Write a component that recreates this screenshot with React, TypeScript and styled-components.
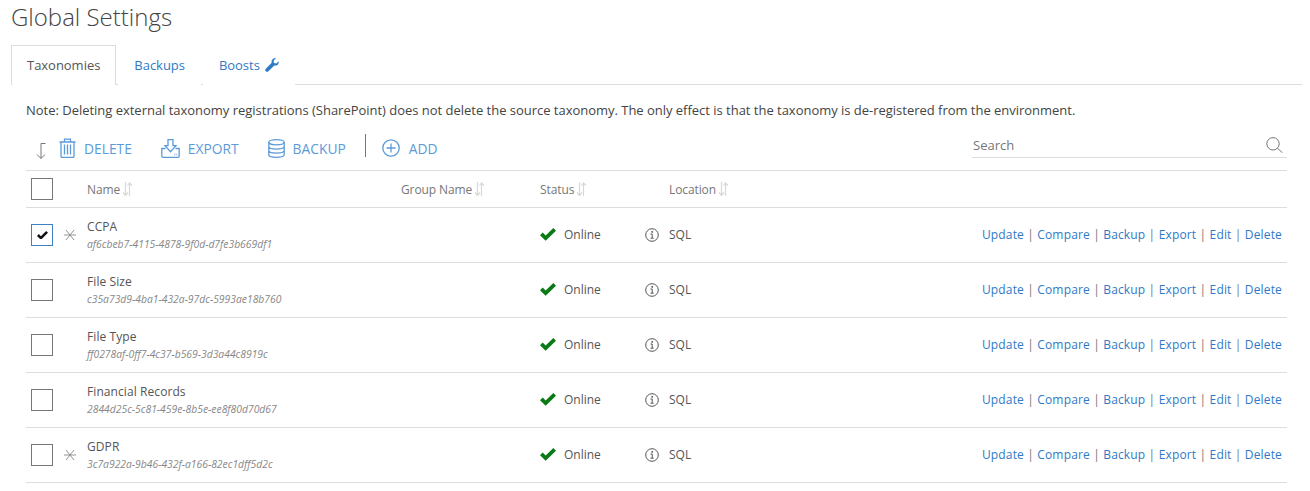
import styled, { createGlobalStyle } from "styled-components";

const rows = [
  { name: "CCPA", id: "af6cbeb7-4115-4878-9f0d-d7fe3b669df1", star: true, checked: true },
  { name: "File Size", id: "c35a73d9-4ba1-432a-97dc-5993ae18b760", star: false, checked: false },
  { name: "File Type", id: "ff0278af-0ff7-4c37-b569-3d3a44c8919c", star: false, checked: false },
  { name: "Financial Records", id: "2844d25c-5c81-459e-8b5e-ee8f80d70d67", star: false, checked: false },
  { name: "GDPR", id: "3c7a922a-9b46-432f-a166-82ec1dff5d2c", star: true, checked: false },
];

const actions = ["Update", "Compare", "Backup", "Export", "Edit", "Delete"];

const GlobalStyle = createGlobalStyle`
  html, body {
    margin: 0;
    background: #fff;
    font-family: "Open Sans", "Liberation Sans", sans-serif;
    color: #444;
  }
`;

const Page = styled.div`
  width: 1310px;
  height: 491px;
  overflow: hidden;
  box-sizing: border-box;
  padding-left: 11px;
`;

const Title = styled.h1`
  margin: 0;
  height: 45px;
  font-size: 24px;
  line-height: 33px;
  font-weight: 300;
  color: #444;
`;

const Tabs = styled.div`
  display: flex;
  height: 40px;
  box-sizing: border-box;
  width: 1291px;
  border-bottom: 1px solid #ddd;
`;

const Tab = styled.div<{ $active?: boolean }>`
  display: flex;
  align-items: center;
  gap: 5px;
  height: 40px;
  box-sizing: border-box;
  padding: 0 15px 1px;
  margin-right: 2px;
  font-size: 13px;
  letter-spacing: -0.03px;
  color: ${(p) => (p.$active ? "#555" : "#2f7ac6")};
  background: #fff;
  border: 1px solid ${(p) => (p.$active ? "#ddd" : "transparent")};
  border-bottom: 0;
`;

const Content = styled.div`
  padding-left: 15px;
  width: 1261px;
`;

const Note = styled.p`
  margin: 0;
  height: 46px;
  padding-top: 16px;
  box-sizing: border-box;
  font-size: 13px;
  line-height: 18px;
  letter-spacing: -0.02px;
  color: #444;
`;

const Toolbar = styled.div`
  display: flex;
  align-items: center;
  height: 39px;
  box-sizing: border-box;
  padding-bottom: 5px;
`;

const SortDown = styled.span`
  display: flex;
  width: 33px;
  padding: 6px 0 0 10px;
  box-sizing: border-box;
`;

const ToolButton = styled.div<{ $gap?: number }>`
  display: flex;
  align-items: center;
  gap: 8px;
  margin-right: ${(p) => p.$gap ?? 29}px;
  font-size: 13.8px;
  color: #5b9bd9;
`;

const Divider = styled.div`
  width: 1px;
  height: 23px;
  background: #777;
  margin: -5px 16px 0 0;
`;

const Search = styled.div`
  margin: 2px 0 0 auto;
  align-self: flex-start;
  width: 315px;
  height: 25px;
  box-sizing: border-box;
  display: flex;
  align-items: center;
  justify-content: space-between;
  padding: 0 4px 0 1px;
  border-bottom: 1px solid #ddd;
  font-size: 13px;
  color: #777;
`;

const Table = styled.div`
  border-top: 1px solid #ddd;
`;

const Row = styled.div<{ $head?: boolean }>`
  display: grid;
  grid-template-columns: 61px 314px 139px 129px 1fr;
  align-items: center;
  height: ${(p) => (p.$head ? 37 : 55)}px;
  box-sizing: border-box;
  border-bottom: 1px solid #ddd;
`;

const CheckCell = styled.div`
  display: flex;
  align-items: center;
  padding-left: 5px;
  gap: 11px;
`;

const Box = styled.div<{ $checked?: boolean }>`
  width: 22px;
  height: 22px;
  box-sizing: border-box;
  border: 1px solid ${(p) => (p.$checked ? "#3f7fc4" : "#777")};
  display: flex;
  align-items: center;
  justify-content: center;
  flex: none;
`;

const HeadLabel = styled.div`
  display: flex;
  align-items: center;
  gap: 2px;
  font-size: 12px;
  letter-spacing: -0.1px;
  color: #777;
`;

const NameCell = styled.div`
  display: flex;
  flex-direction: column;
  gap: 3px;
`;

const Name = styled.div`
  font-size: 12px;
  line-height: 16px;
  letter-spacing: 0.08px;
  color: #555;
`;

const Guid = styled.div`
  font-size: 10.35px;
  line-height: 13px;
  font-style: italic;
  color: #888;
`;

const StatusCell = styled.div`
  display: flex;
  align-items: center;
  justify-content: space-between;
  font-size: 12px;
  color: #555;
  padding-right: 10px;
  margin-top: -1px;
`;

const StatusText = styled.span`
  display: flex;
  align-items: center;
  gap: 8px;
`;

const Location = styled.div`
  font-size: 12px;
  color: #555;
`;

const Links = styled.div`
  display: flex;
  justify-content: space-between;
  padding-right: 5px;
  font-size: 12px;
  color: #2f7ac6;
  margin-top: -1px;
`;

const ActionLinks = styled.div`
  letter-spacing: 0.15px;
`;

const Pipe = styled.span`
  color: #777;
  margin: 0 3.3px;
`;

const Trash = () => (
  <svg width="17" height="20" viewBox="0 0 17 20" fill="none" stroke="#5b9bd9" strokeWidth="1.3">
    <path d="M.5 4h16M5.500 4V1.200h6V4M2 4v14.300c0 .7.5 1.100 1.100 1.100h10.800c.6 0 1.100-.4 1.100-1.100V4M5.500 6.500v10M8.500 6.500v10M11.500 6.500v10" />
  </svg>
);

const ExportIcon = () => (
  <svg width="19" height="19" viewBox="0 0 19 19" fill="none" stroke="#5b9bd9" strokeWidth="1.3">
    <path d="M7 .7h5v6h3l-5.500 6-5.500-6h3zM4.500 9.500H.8v7.500c0 .7.6 1.300 1.300 1.300h14.800c.7 0 1.300-.6 1.300-1.300V9.500h-3.700M13.500 15.500h.8M15.500 15.500h.8" />
  </svg>
);

const DbIcon = () => (
  <svg width="17" height="19" viewBox="0 0 17 19" fill="none" stroke="#5b9bd9" strokeWidth="1.3">
    <ellipse cx="8.500" cy="3.300" rx="7.700" ry="2.600" />
    <path d="M.8 3.300v12.400c0 1.500 3.400 2.600 7.700 2.600s7.700-1.100 7.700-2.600V3.300M.8 7.500c0 1.500 3.400 2.600 7.700 2.600s7.700-1.100 7.700-2.600M.8 11.600c0 1.500 3.400 2.600 7.700 2.600s7.700-1.100 7.700-2.600" />
  </svg>
);

const PlusIcon = () => (
  <svg width="19" height="18" viewBox="0 0 19 18" fill="none" stroke="#5b9bd9" strokeWidth="1.3">
    <circle cx="9" cy="9" r="8.200" />
    <path d="M9 4.500v9M4.500 9h9" />
  </svg>
);

const Wrench = () => (
  <svg width="14" height="14" viewBox="0 0 14 14" fill="#2f7ac6">
    <path d="M13.700 3.200c.2.800.1 1.800-.4 2.700-.8 1.400-2.500 2-4 1.500L3.400 13.300c-.7.700-1.900.7-2.600 0-.8-.7-.8-1.900 0-2.600l5.900-5.900c-.5-1.500.1-3.200 1.500-4C9.100.3 10.100.2 10.900.4L8.500 2.800l.5 2.300 2.300.5z" />
  </svg>
);

const SortBoth = () => (
  <svg width="11" height="14" viewBox="0 0 11 14" fill="none" stroke="#d8d8d8" strokeWidth="1.2">
    <path d="M3.500 0v13M1 10.500l2.500 3 2.500-3M7.500 14V1M5.500 3.500L7.500 1l2.500 2.500" />
  </svg>
);

const SortArrow = () => (
  <svg width="10" height="16" viewBox="0 0 10 16" fill="none" stroke="#777" strokeWidth="1">
    <path d="M9.500.5H5v15M1 11.500l4 4 4-4" />
  </svg>
);

const SearchIcon = () => (
  <svg width="17" height="16" viewBox="0 0 17 16" fill="none" stroke="#777" strokeWidth="1">
    <circle cx="7" cy="6.800" r="6.200" />
    <path d="M11.500 11.300L16.500 15.800" />
  </svg>
);

const Tick = ({ size, color }: { size: number; color: string }) => (
  <svg width={size} height={size * 0.8} viewBox="0 0 15 12" fill={color}>
    <path d="M5.300 12L0 6.700 2.500 4.200l2.800 2.800L12.500 0 15 2.500z" />
  </svg>
);

const Star = () => (
  <svg width="12" height="12" viewBox="0 0 12 12" fill="none" stroke="#888" strokeWidth="0.9">
    <path d="M0 6h12M2 1l8 10M2 11l8-10" />
  </svg>
);

const Info = () => (
  <svg width="14" height="14" viewBox="0 0 14 14" fill="none" stroke="#555" strokeWidth="1">
    <circle cx="7" cy="7" r="6.300" />
    <path d="M5.500 6h1.700v4M5.500 10.200h3.200M6.800 3.400h.8v1h-.8z" />
  </svg>
);

export default function App() {
  return (
    <Page>
      <GlobalStyle />
      <Title>Global Settings</Title>
      <Tabs>
        <Tab $active>Taxonomies</Tab>
        <Tab>Backups</Tab>
        <Tab>
          Boosts <Wrench />
        </Tab>
      </Tabs>
      <Content>
        <Note>
          Note: Deleting external taxonomy registrations (SharePoint) does not delete the source taxonomy. The only
          effect is that the taxonomy is de-registered from the environment.
        </Note>
        <Toolbar>
          <SortDown>
            <SortArrow />
          </SortDown>
          <ToolButton>
            <Trash /> DELETE
          </ToolButton>
          <ToolButton>
            <ExportIcon /> EXPORT
          </ToolButton>
          <ToolButton $gap={19}>
            <DbIcon /> BACKUP
          </ToolButton>
          <Divider />
          <ToolButton>
            <PlusIcon /> ADD
          </ToolButton>
          <Search>
            Search
            <SearchIcon />
          </Search>
        </Toolbar>
        <Table>
          <Row $head>
            <CheckCell>
              <Box />
            </CheckCell>
            <HeadLabel>
              Name <SortBoth />
            </HeadLabel>
            <HeadLabel>
              Group Name <SortBoth />
            </HeadLabel>
            <HeadLabel>
              Status <SortBoth />
            </HeadLabel>
            <HeadLabel>
              Location <SortBoth />
            </HeadLabel>
          </Row>
          {rows.map((r) => (
            <Row key={r.id}>
              <CheckCell>
                <Box $checked={r.checked}>{r.checked && <Tick size={11} color="#111" />}</Box>
                {r.star && <Star />}
              </CheckCell>
              <NameCell>
                <Name>{r.name}</Name>
                <Guid>{r.id}</Guid>
              </NameCell>
              <div />
              <StatusCell>
                <StatusText>
                  <Tick size={16} color="#0a7a17" /> Online
                </StatusText>
                <Info />
              </StatusCell>
              <Links>
                <Location>SQL</Location>
                <ActionLinks>
                  {actions.map((a, i) => (
                    <span key={a}>
                      {i > 0 && <Pipe>|</Pipe>}
                      {a}
                    </span>
                  ))}
                </ActionLinks>
              </Links>
            </Row>
          ))}
        </Table>
      </Content>
    </Page>
  );
}
